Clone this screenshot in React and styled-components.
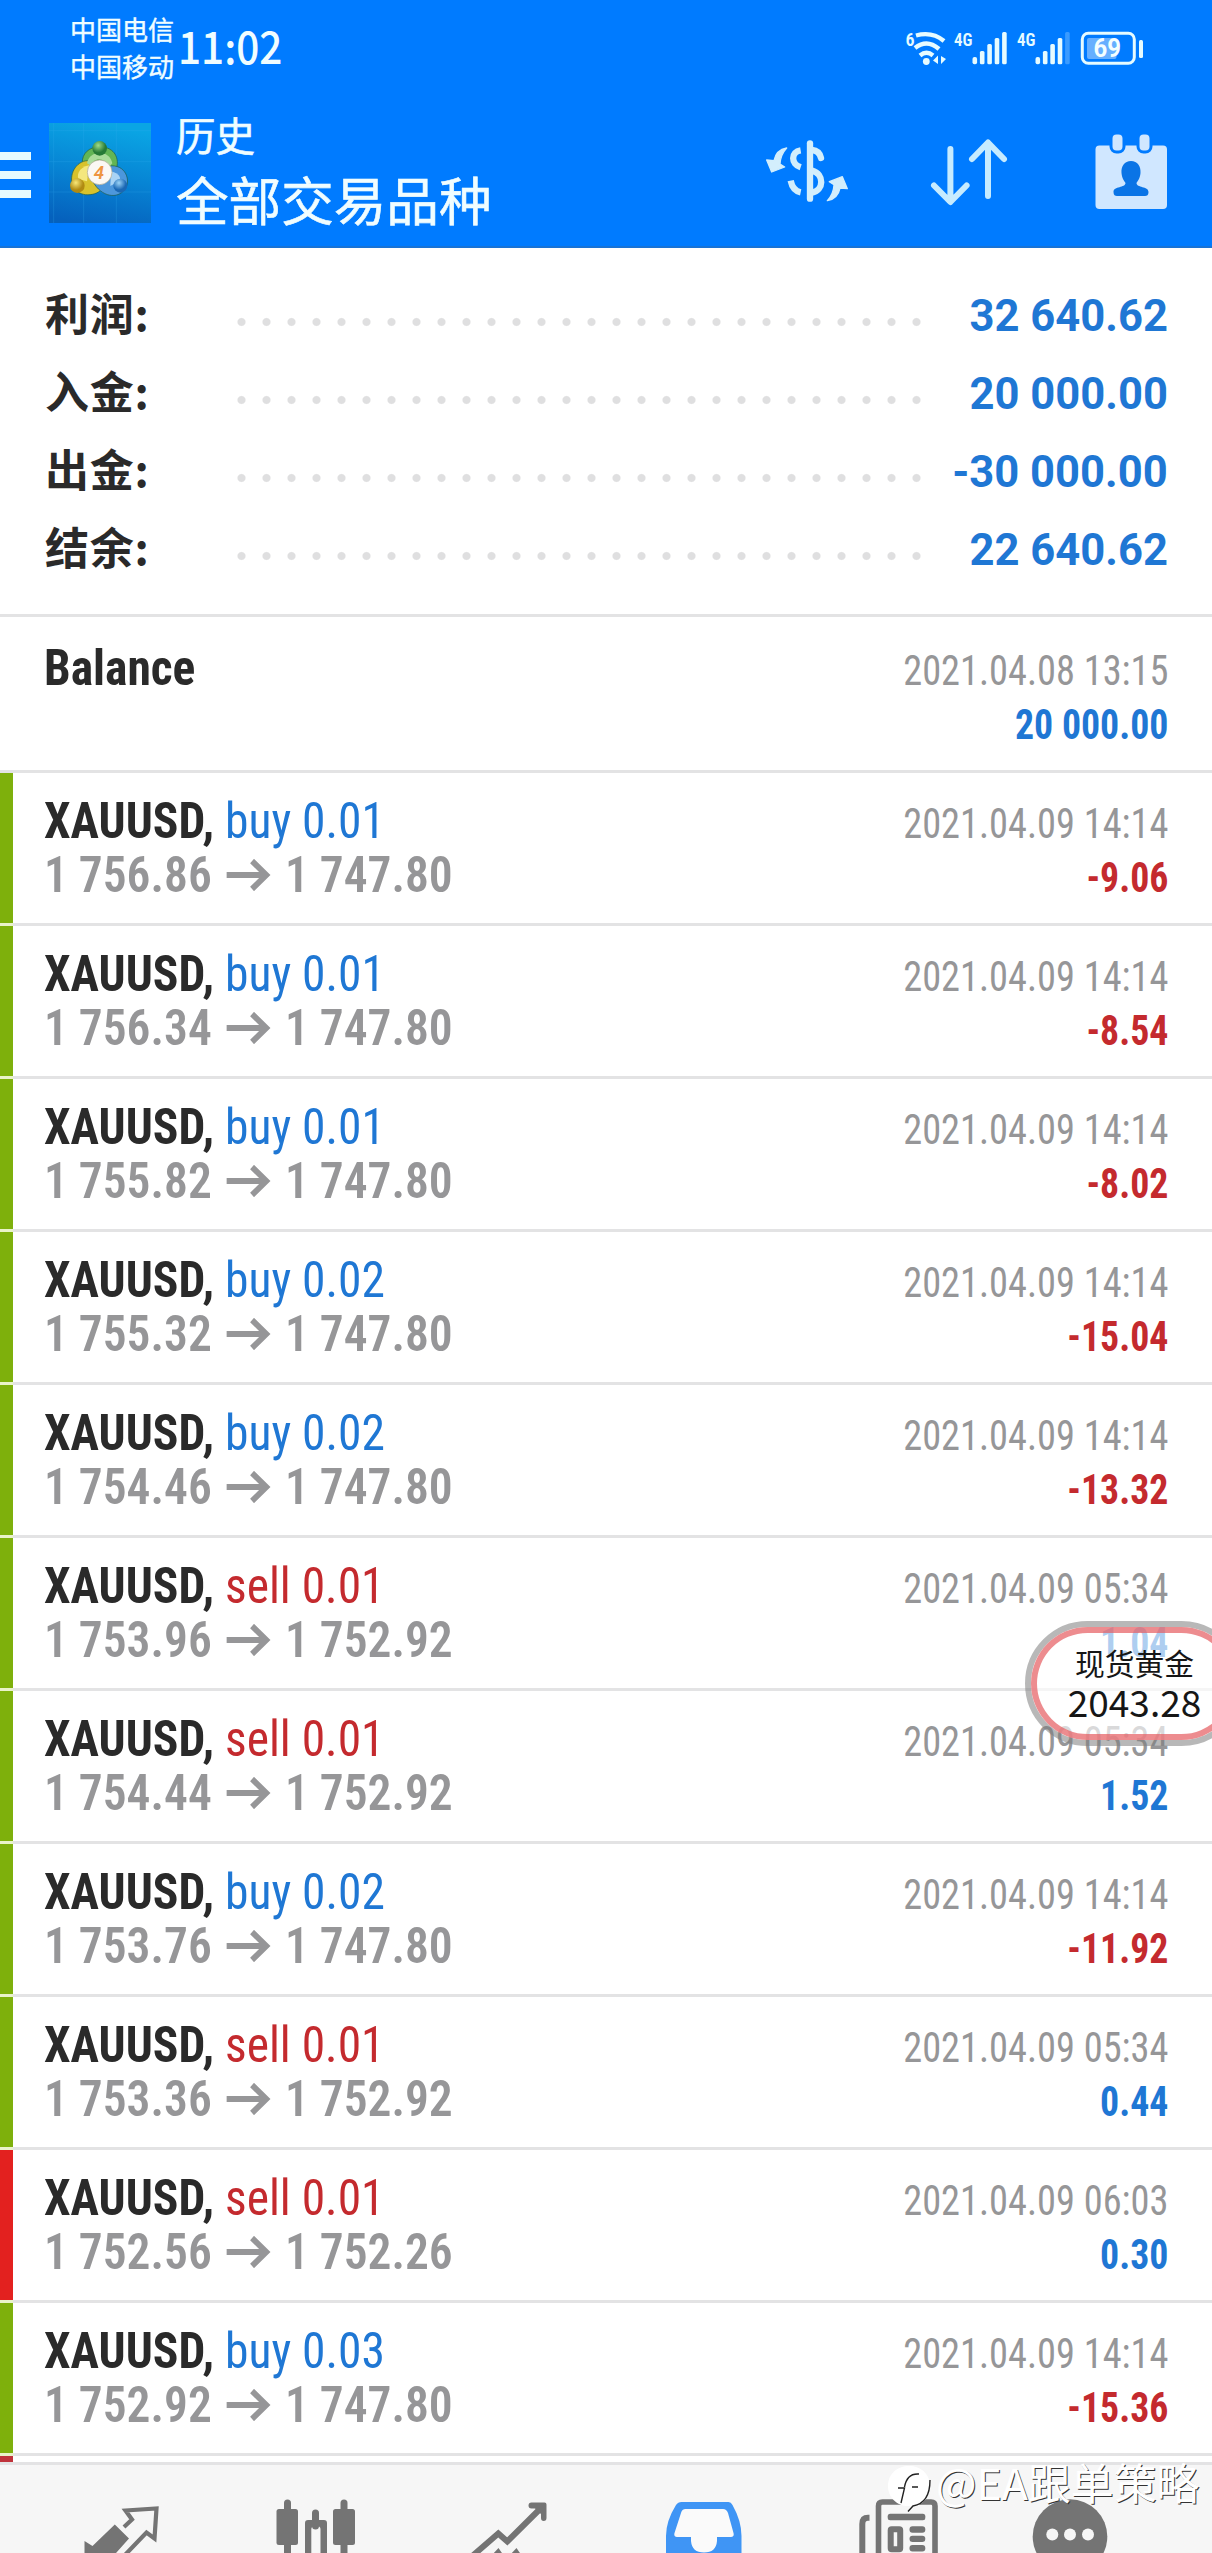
import React from 'react';
import styled, { createGlobalStyle } from 'styled-components'

const header = '#007bff'
const blue = '#1f77d4'
const red = '#c42a2e'
const grey = '#969698'
const dark = '#2a2a2a'
const line = '#e3e3e4'
const tabGrey = '#747474'

const cjk = '"Noto Sans CJK SC", sans-serif'
const condensed = '"Roboto Condensed", Roboto, sans-serif'


const GlobalStyle = createGlobalStyle`
  body {
    margin: 0;
    background: #fff;
  }

  svg {
    display: block;
    flex: none;
  }
`

const Screen = styled.div`
  position: relative;
  width: 1212px;
  height: 2553px;
  overflow: hidden;
  background: #fff;
  font-family: ${condensed};
  white-space: nowrap;
`

const Header = styled.header`
  height: 248px;
  box-sizing: border-box;
  background: ${header};
  border-bottom: 2px solid #1873d6;
  color: #f0fdff;
`

const StatusBar = styled.div`
  display: flex;
  align-items: flex-start;
  height: 92px;
  padding: 0 68px 0 70px;
`

const Carriers = styled.div`
  padding-top: 10px;
  font: 400 26px/37px ${cjk};
  -webkit-text-stroke: .4px;
`

const Clock = styled.div`
  margin: 15px 0 0 4px;
  font: 500 44px/60px ${cjk};
  transform: scaleX(.92);
  transform-origin: left;
`

const StatusIcons = styled.div`
  display: flex;
  gap: 8px;
  margin: 31px 0 0 auto;

  svg {
    overflow: visible;
  }
`

const AppBar = styled.div`
  display: flex;
  align-items: flex-start;
`

const Burger = styled.div`
  width: 31px;
  height: 46px;
  margin-top: 60px;
  background: linear-gradient(#e6fbff 8px, transparent 8px, transparent 19px, #e6fbff 19px, #e6fbff 27px, transparent 27px, transparent 38px, #e6fbff 38px);
`

const Logo = styled.svg`
  margin: 31px 0 0 18px;
`

const Titles = styled.div`
  margin: 15px 0 0 25px;
  font-family: ${cjk};
  -webkit-text-stroke: .6px;
`

const Title = styled.div`
  font-size: 39.5px;
  line-height: 54px;
`

const Subtitle = styled.div`
  margin-top: 2px;
  font-size: 52.6px;
  line-height: 70px;
`

const Actions = styled.div`
  display: flex;
  gap: 80px;
  margin: 38px 44px 0 auto;
`

const Summary = styled.section`
  padding: 25px 44px 29px 45px;
  border-bottom: 3px solid ${line};
`

const SummaryRow = styled.div`
  display: flex;
  align-items: baseline;
  height: 78px;
`

const SummaryLabel = styled.div`
  width: 184px;
  color: ${dark};
  font: 700 44px/78px ${cjk};
  letter-spacing: .7px;
`

const Dots = styled.div`
  align-self: flex-start;
  width: 700px;
  height: 10px;
  margin-top: 44px;
  background: radial-gradient(circle, #dfdfe0 3.4px, transparent 4.6px) 0 0 / 25px 10px;
`

const SummaryValue = styled.div`
  margin-left: auto;
  color: ${blue};
  font: 700 45px/70px Roboto, sans-serif;
  transform: scaleX(.968);
  transform-origin: right;
`

const List = styled.main`
  height: 1845px;
  overflow: hidden;
`

const Row = styled.div`
  display: flex;
  height: ${props => props.$first ? 153 : 150}px;
  border-bottom: 3px solid ${line};
`

// runs over the row's bottom line, which turns pale there
const Stripe = styled.div`
  flex: none;
  width: 13px;
  height: 100%;
  background: ${props => props.$color || 'transparent'};
  border-bottom: 3px solid ${props => props.$color ? '#e9f3c9' : 'transparent'};
`

const RowMain = styled.div`
  padding: ${props => props.$first ? 24 : 21}px 0 0 31px;
  font-size: 50px;
  line-height: 54px;
  transform: scaleX(.95);
  transform-origin: 31px 0;
`

const Symbol = styled.div`
  color: ${dark};
  font-weight: 700;
`

const Side = styled.span`
  color: ${props => props.$sell ? red : blue};
  font-weight: 400;
`

const Prices = styled.div`
  display: flex;
  align-items: center;
  color: ${grey};
  font-weight: 600;

  svg {
    margin: 0 15px;
  }
`

const RowAside = styled.div`
  margin-left: auto;
  padding: ${props => props.$first ? 27 : 24}px 44px 0 0;
  font-size: 42px;
  line-height: 54px;
  text-align: right;
`

const DateTime = styled.div`
  color: ${grey};
  transform: scaleX(.913);
  transform-origin: right;
`

const Profit = styled.div`
  color: ${props => props.$loss ? red : blue};
  font-weight: 700;
  transform: scaleX(.9);
  transform-origin: right;
`

const Tabs = styled.nav`
  display: flex;
  height: 88px;
  padding-left: 25px;
  overflow: hidden;
  background: #f6f6f6;
  border-top: 3px solid ${line};
`

const Quote = styled.div`
  position: absolute;
  left: 1025px;
  top: 1621px;
  width: 207px;
  height: 113px;
  border: 6px solid rgba(125, 125, 125, .55);
  border-radius: 63px;
`

const QuoteInner = styled.div`
  height: 101px;
  border: 6px solid rgba(230, 95, 100, .72);
  border-radius: 57px;
  background: rgba(255, 255, 255, .64);
  color: #161616;
  font-family: ${cjk};
  text-align: center;
`

const QuoteName = styled.div`
  padding-top: 11px;
  font-size: 29.8px;
  line-height: 37px;
`

const QuotePrice = styled.div`
  font-size: 37px;
  line-height: 40px;
`

const Watermark = styled.div`
  position: absolute;
  left: 886px;
  top: 2451px;
  display: flex;
  color: #fff;
  font: 400 42.9px/60px ${cjk};
  text-shadow: 1px 1px 0 #333;

  svg {
    margin: 13px 4px 0 0;
  }
`

const summary = [
  ['利润:', '32 640.62'],
  ['入金:', '20 000.00'],
  ['出金:', '-30 000.00'],
  ['结余:', '22 640.62'],
]

const trades = [
  ['buy', '0.01', '1 756.86', '1 747.80', '14:14', '-9.06'],
  ['buy', '0.01', '1 756.34', '1 747.80', '14:14', '-8.54'],
  ['buy', '0.01', '1 755.82', '1 747.80', '14:14', '-8.02'],
  ['buy', '0.02', '1 755.32', '1 747.80', '14:14', '-15.04'],
  ['buy', '0.02', '1 754.46', '1 747.80', '14:14', '-13.32'],
  ['sell', '0.01', '1 753.96', '1 752.92', '05:34', '1.04'],
  ['sell', '0.01', '1 754.44', '1 752.92', '05:34', '1.52'],
  ['buy', '0.02', '1 753.76', '1 747.80', '14:14', '-11.92'],
  ['sell', '0.01', '1 753.36', '1 752.92', '05:34', '0.44'],
  ['sell', '0.01', '1 752.56', '1 752.26', '06:03', '0.30', '#e3211f'],
  ['buy', '0.03', '1 752.92', '1 747.80', '14:14', '-15.36'],
]

const WifiIcon = () => (
  <svg width="41" height="34" viewBox="905 31 41 34" fill="none" stroke="#e6fbff" strokeWidth="4.4">
    <text x="905.5" y="45.5" fontSize="18" fontWeight="600" fill="#e6fbff" stroke="none">6</text>
    <path d="M916 35.5 Q932 31 944 41" />
    <path d="M915 48 Q927 38.5 939 49" />
    <path d="M920 55.5 Q926.5 50 933 55.5" />
    <circle cx="926.3" cy="61.5" r="3.4" fill="#e6fbff" stroke="none" />
    <path d="M933 60.5 L938 55.5 V64 M941 56 V64 L946 59 Z" fill="#e6fbff" stroke="none" />
  </svg>
)

const SignalIcon = ({ weak }) => (
  <svg width="55" height="34" viewBox="954 31 55 34" fill="#e6fbff">
    <text x="954" y="45.5" fontSize="18.5" fontWeight="600" textLength="18.5" lengthAdjust="spacingAndGlyphs">4G</text>
    <rect x="972.5" y="57" width="4.6" height="7.3" rx="2" />
    <rect x="979.9" y="51" width="4.6" height="13.3" rx="1.5" />
    <rect x="987.3" y="44" width="4.6" height="20.3" rx="1.5" />
    <rect x="994.7" y="38" width="4.6" height="26.3" rx="1.5" />
    <rect x="1002.1" y="32" width="4.6" height="32.3" rx="1.5" opacity={weak ? .25 : 1} />
  </svg>
)

const BatteryIcon = () => (
  <svg width="64" height="34" viewBox="1080 31 64 34">
    <rect x="1082.3" y="33.3" width="52" height="30" rx="6" fill="none" stroke="#e6fbff" strokeWidth="3" />
    <rect x="1087" y="38" width="29.5" height="21" rx="2" fill="#fff" opacity=".4" />
    <rect x="1139" y="40" width="4" height="18" rx="1.5" fill="#e6fbff" />
    <text x="1093.5" y="57.2" fontSize="26" fontWeight="700" fontFamily="Roboto" fill="#f4feff" textLength="27.5" lengthAdjust="spacingAndGlyphs">69</text>
  </svg>
)

const AppLogo = () => (
  <Logo width="102" height="100" viewBox="28 39 306 300">
    <defs>
      <linearGradient id="sky" x1=".5" y1="0" x2=".3" y2="1">
        <stop offset="0" stopColor="#0aa5e4" />
        <stop offset=".5" stopColor="#0784d4" />
        <stop offset="1" stopColor="#0561bd" />
      </linearGradient>
      <radialGradient id="g" cx=".4" cy=".3"><stop offset="0" stopColor="#9fdc8a" /><stop offset="1" stopColor="#267a36" /></radialGradient>
      <radialGradient id="y" cx=".4" cy=".3"><stop offset="0" stopColor="#f8e878" /><stop offset="1" stopColor="#b08a12" /></radialGradient>
      <radialGradient id="b" cx=".4" cy=".3"><stop offset="0" stopColor="#9bd3f7" /><stop offset="1" stopColor="#1a67b4" /></radialGradient>
    </defs>
    <rect x="28" y="39" width="306" height="300" fill="url(#sky)" />
    <path d="M42 39V339M132 39V339M230 39V339M28 62H334M28 155H334M28 246H334" stroke="#37aef0" strokeWidth="2" opacity=".35" />
    <g stroke="#1d5a45" strokeWidth="2">
      <path d="M128 158 C126 95 235 92 233 160 C232 180 222 196 212 205 L150 165 Z" fill="#62b555" />
      <path d="M152 152 C112 148 88 190 98 222 C108 262 165 262 186 238 L150 200 Z" fill="#d8c22c" />
      <path d="M206 168 C260 160 275 215 255 238 C235 268 185 262 160 215 L200 210 Z" fill="#4c97dc" />
    </g>
    <path d="M142 160 C150 118 210 118 218 160 L205 175 C200 140 160 140 155 168 Z" fill="#a9dc9a" />
    <path d="M148 166 C115 172 110 200 118 208 L142 214 Z" fill="#f4e77e" />
    <path d="M214 184 C240 190 244 205 240 212 L212 228 Z" fill="#a9d3f4" />
    <circle cx="180" cy="115" r="22" fill="url(#g)" />
    <circle cx="113" cy="227" r="22" fill="url(#y)" />
    <circle cx="242" cy="227" r="21" fill="url(#b)" />
    <circle cx="180" cy="187" r="37" fill="#fbf8f4" stroke="#a9a48c" strokeWidth="2" />
    <text x="178" y="206" fontSize="56" fontStyle="italic" fontWeight="600" fontFamily="Roboto" fill="#ee9440" textAnchor="middle">4</text>
  </Logo>
)

const MoneyIcon = () => (
  <svg width="86" height="80" viewBox="42 30 258 240" fill="none" stroke="#d3eefc" strokeWidth="19">
    <path d="M152 91 C122 96 122 132 152 142" />
    <path d="M122 182 Q128 212 152 217" strokeLinecap="butt" />
    <path d="M180 70 V236" strokeLinecap="round" />
    <path d="M186 90 Q208 92 213 114" strokeLinecap="round" />
    <path d="M186 152 C224 162 222 212 186 218" />
    <g fill="#d3eefc" stroke="#d3eefc" strokeWidth="4" strokeLinejoin="round">
      <path d="M110 84 C88 88 76 102 72 122 L50 120 L65 156 L104 141 L90 132 C91 110 99 96 110 84 Z" />
      <path d="M110 84 C88 88 76 102 72 122 L50 120 L65 156 L104 141 L90 132 C91 110 99 96 110 84 Z" transform="rotate(180 171 163)" />
    </g>
  </svg>
)

const SortIcon = () => (
  <svg width="84" height="80" viewBox="930 130 84 80" fill="none" stroke="#c6ebff" strokeWidth="6" strokeLinecap="round" strokeLinejoin="round">
    <path d="M950.4 149 V201 M934 185.5 L950.4 202 L966.6 185.5" />
    <path d="M988 196 V143 M972 159 L988 142.5 L1004 159" />
  </svg>
)

const CalendarIcon = () => (
  <svg width="74" height="80" viewBox="1094 130 74 80">
    <rect x="1095.5" y="145.5" width="71.5" height="63.5" rx="4" fill="#d0e7ff" />
    <g fill="#d0e7ff" stroke={header} strokeWidth="3">
      <rect x="1111" y="133" width="13" height="19" rx="5.5" />
      <rect x="1138" y="133" width="13" height="19" rx="5.5" />
    </g>
    <path d="M1131 161 C1137.5 161 1141 166 1140.5 173 C1140 179 1137.5 181 1136.5 183 C1136.5 188 1148.5 186 1148.5 192 C1148.5 195 1147 196 1145 196 H1117 C1115 196 1113.5 195 1113.5 192 C1113.5 186 1125.5 188 1125.5 183 C1124.5 181 1122 179 1121.5 173 C1121 166 1124.5 161 1131 161 Z" fill="#0a74e6" />
  </svg>
)

const Arrow = () => (
  <svg width="47" height="32" viewBox="0 0 47 32" fill="none" stroke={grey} strokeWidth="6">
    <path d="M0 16 H42 M27 2 L42 16 L27 30" />
  </svg>
)

const Tab = ({ x, children }) => (
  <svg width="194" height="88" viewBox={`${x} 2465 194 88`} fill={tabGrey}>{children}</svg>
)

const TabBar = () => (
  <Tabs>
    <Tab x="25">
      <path d="M84.5 2541 L92.5 2546 L114.8 2524.5 L129 2538.5 L108 2562 H84.5 Z" />
      <path d="M124 2527 L132 2519.5 L125.5 2510.5 L156.5 2508.5 L154.5 2538.5 L146.5 2532.5 L124 2556" fill="none" stroke={tabGrey} strokeWidth="4.2" />
    </Tab>
    <Tab x="219">
      <rect x="276.5" y="2509" width="21.5" height="36" rx="2.5" />
      <rect x="284" y="2499.5" width="7" height="60" rx="3.5" />
      <rect x="333" y="2509" width="22" height="36" rx="2.5" />
      <rect x="340.5" y="2499.5" width="7" height="60" rx="3.5" />
      <rect x="312" y="2509.5" width="7" height="20" rx="3.5" />
      <path d="M305 2560 V2523 Q305 2520 308 2520 H324 Q327 2520 327 2523 V2560 H320.5 V2529 Q320.5 2526 316 2526 Q311.3 2526 311.3 2529 V2560 Z" />
    </Tab>
    <Tab x="413">
      <path d="M470 2558 L498.3 2533.5 L507.3 2541.5 L543 2506" fill="none" stroke={tabGrey} strokeWidth="6" />
      <path d="M531.5 2502.5 H544.5 Q546.5 2502.5 546.5 2504.5 V2518 Q546.5 2521 543.7 2521 Q541 2521 541 2518 V2514 L535 2508.5 H531.5 Q528.5 2508.5 528.5 2505.5 Q528.5 2502.5 531.5 2502.5 Z" />
      <path d="M491 2556 L498.5 2548 L504 2556 Z M509 2556 L516.5 2548 L522 2556 Z" />
    </Tab>
    <Tab x="607">
      <path d="M681.5 2502 H728.5 Q731 2502 732.5 2505 Q741.5 2521 741.5 2536 V2560 H666 V2536 Q666 2521 676 2505 Q678 2502 681.5 2502 Z" fill="#3f95f5" />
      <path d="M685.5 2509 H723 Q726.5 2509 728 2513 L733.5 2533 Q734.5 2537 731 2537 H717 V2541 Q716 2552.5 704 2552.5 Q692 2552.5 691 2541 V2537 H677 Q673.5 2537 674.5 2533 L681 2513 Q682 2509 685.5 2509 Z" fill="#fafafa" />
    </Tab>
    <Tab x="801">
      <path d="M869.5 2517.7 H868 Q862.3 2517.7 862.3 2524 V2560" fill="none" stroke={tabGrey} strokeWidth="6" />
      <path d="M878.5 2560 V2506 Q878.5 2502 882.5 2502 H931 Q935 2502 935 2506 V2560" fill="none" stroke={tabGrey} strokeWidth="5.6" />
      <rect x="887.7" y="2513.7" width="37.6" height="6.5" rx="2.5" />
      <rect x="890.7" y="2529.3" width="9.5" height="20" rx="1" fill="none" stroke={tabGrey} strokeWidth="6" />
      <rect x="909.5" y="2526.3" width="15.8" height="6.4" rx="3" />
      <rect x="909.5" y="2535.7" width="15.8" height="6.4" rx="3" />
      <rect x="909.5" y="2545" width="15.8" height="6.4" rx="3" />
    </Tab>
    <Tab x="995">
      <circle cx="1070" cy="2536.6" r="37.3" />
      <g fill="#f6f6f6">
        <circle cx="1052.3" cy="2534.5" r="6" />
        <circle cx="1070" cy="2534.5" r="6" />
        <circle cx="1088" cy="2534.5" r="6" />
      </g>
    </Tab>
  </Tabs>
)

const Trade = ({ trade }) => {
  const [side, lot, open, close, time, profit, stripe = '#7eb00c'] = trade
  return (
    <Row>
      <Stripe $color={stripe} />
      <RowMain>
        <Symbol>XAUUSD, <Side $sell={side === 'sell'}>{side} {lot}</Side></Symbol>
        <Prices>{open}<Arrow />{close}</Prices>
      </RowMain>
      <RowAside>
        <DateTime>2021.04.09 {time}</DateTime>
        <Profit $loss={profit.startsWith('-')}>{profit}</Profit>
      </RowAside>
    </Row>
  )
}

const App = () => (
  <Screen>
    <GlobalStyle />
    <Header>
      <StatusBar>
        <Carriers>
          <div>中国电信</div>
          <div>中国移动</div>
        </Carriers>
        <Clock>11:02</Clock>
        <StatusIcons>
          <WifiIcon />
          <SignalIcon />
          <SignalIcon weak />
          <BatteryIcon />
        </StatusIcons>
      </StatusBar>
      <AppBar>
        <Burger />
        <AppLogo />
        <Titles>
          <Title>历史</Title>
          <Subtitle>全部交易品种</Subtitle>
        </Titles>
        <Actions>
          <MoneyIcon />
          <SortIcon />
          <CalendarIcon />
        </Actions>
      </AppBar>
    </Header>
    <Summary>
      {summary.map(([label, value]) => (
        <SummaryRow key={label}>
          <SummaryLabel>{label}</SummaryLabel>
          <Dots />
          <SummaryValue>{value}</SummaryValue>
        </SummaryRow>
      ))}
    </Summary>
    <List>
      <Row $first>
        <Stripe />
        <RowMain $first>
          <Symbol>Balance</Symbol>
        </RowMain>
        <RowAside $first>
          <DateTime>2021.04.08 13:15</DateTime>
          <Profit>20 000.00</Profit>
        </RowAside>
      </Row>
      {trades.map((trade, i) => <Trade key={i} trade={trade} />)}
      <Row>
        <Stripe $color="#c0333b" />
      </Row>
    </List>
    <TabBar />
    <Quote>
      <QuoteInner>
        <QuoteName>现货黄金</QuoteName>
        <QuotePrice>2043.28</QuotePrice>
      </QuoteInner>
    </Quote>
    <Watermark>
      <svg width="46" height="48" viewBox="886 2464 46 48">
        <path d="M909 2466 C921 2466 930 2474 930 2486 C930 2498 922 2505 914 2506 L909 2512 L910 2506 C898 2507 888 2498 888 2486 C888 2474 897 2466 909 2466 Z" fill="#fff" />
        <path d="M901 2503 L904.5 2488 H898 M904.5 2487 Q907 2473 919 2474 M912 2487 H918 M930 2480 Q930 2503 913 2506 L908 2511.5" fill="none" stroke="#222" strokeWidth="1.4" />
      </svg>
      @EA跟单策略
    </Watermark>
  </Screen>
)

export default App;
